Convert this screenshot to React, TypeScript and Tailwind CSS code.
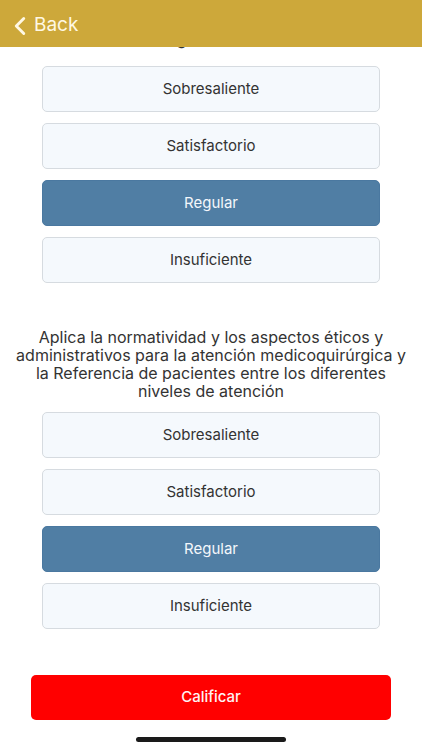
import { ChevronLeft } from "lucide-react";

const options = ["Sobresaliente", "Satisfactorio", "Regular", "Insuficiente"];

function OptionGroup({ selected }: { selected: string }) {
  return (
    <div className="flex flex-col gap-[11px] px-[42px]">
      {options.map((opt) => {
        const active = opt === selected;
        return (
          <button
            key={opt}
            className={
              active
                ? "h-[46px] w-full rounded-[5px] border border-[#4a78a0] bg-[#507ea4] text-[15px] text-[#f4f7fb]"
                : "h-[46px] w-full rounded-[5px] border border-[#d6dbe0] bg-[#f5f9fd] text-[15px] text-[#333]"
            }
          >
            {opt}
          </button>
        );
      })}
    </div>
  );
}

export default function App() {
  return (
    <div
      className="flex h-[750px] w-[422px] flex-col overflow-hidden bg-white"
      style={{ fontFamily: "Inter, 'Open Sans', sans-serif" }}
    >
      <header className="flex h-[47px] shrink-0 items-center bg-[#cda83a] pl-[5px] pt-[4px]">
        <ChevronLeft className="h-[30px] w-[30px] text-[#fff8e4]" strokeWidth={2.3} />
        <span className="-ml-[1px] text-[19px] text-[#fff8e4]">Back</span>
      </header>

      <div className="flex h-[19px] flex-col justify-end overflow-hidden">
        <p className="mb-[18px] pr-[26px] text-center text-[16px] leading-[18px] text-[#333]">
          diagnóstico
        </p>
      </div>

      <OptionGroup selected="Regular" />

      <p className="mt-[45px] whitespace-nowrap text-center text-[16px] leading-[18px] text-[#333]">
        Aplica la normatividad y los aspectos éticos y<br />
        administrativos para la atención medicoquirúrgica y<br />
        la Referencia de pacientes entre los diferentes<br />
        niveles de atención
      </p>

      <div className="mt-[12px]">
        <OptionGroup selected="Regular" />
      </div>

      <div className="mt-[46px] px-[31px]">
        <button className="h-[45px] w-full rounded-[5px] bg-[#ff0000] text-[15px] font-medium text-[#fff3f3]">
          Calificar
        </button>
      </div>

      <div className="mt-[17px] flex justify-center">
        <div className="h-[5px] w-[150px] rounded-full bg-[#1a1a1a]" />
      </div>
    </div>
  );
}
